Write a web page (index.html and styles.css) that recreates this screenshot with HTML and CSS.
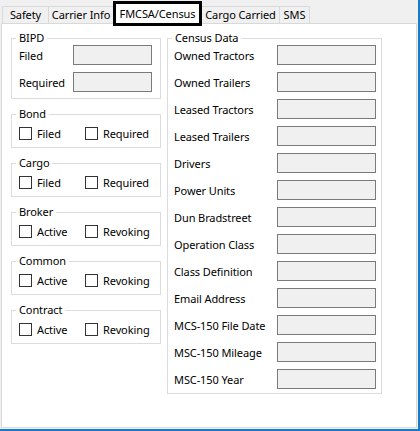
FILE: index.html
```html
<!DOCTYPE html>
<html>
<head>
<meta charset="utf-8">
<link rel="stylesheet" href="styles.css">
</head>
<body>
<div class="window">
  <div class="tabs">
    <div class="tab tab-safety">Safety</div>
    <div class="tab tab-carrier">Carrier Info</div>
    <div class="tab tab-active">FMCSA/Census</div>
    <div class="tab tab-cargo">Cargo Carried</div>
    <div class="tab tab-sms">SMS</div>
  </div>
  <div class="panel">
    <div class="col-left">
      <div class="group">
        <div class="group-title">BIPD</div>
        <div class="fields fields-bipd">
          <div class="field"><span>Filed</span><span class="textbox textbox-sm"></span></div>
          <div class="field"><span>Required</span><span class="textbox textbox-sm"></span></div>
        </div>
      </div>
      <div class="group">
        <div class="group-title">Bond</div>
        <div class="checks">
          <label class="check"><span class="box"></span>Filed</label>
          <label class="check"><span class="box"></span>Required</label>
        </div>
      </div>
      <div class="group">
        <div class="group-title">Cargo</div>
        <div class="checks">
          <label class="check"><span class="box"></span>Filed</label>
          <label class="check"><span class="box"></span>Required</label>
        </div>
      </div>
      <div class="group">
        <div class="group-title">Broker</div>
        <div class="checks">
          <label class="check"><span class="box"></span>Active</label>
          <label class="check"><span class="box"></span>Revoking</label>
        </div>
      </div>
      <div class="group">
        <div class="group-title">Common</div>
        <div class="checks">
          <label class="check"><span class="box"></span>Active</label>
          <label class="check"><span class="box"></span>Revoking</label>
        </div>
      </div>
      <div class="group">
        <div class="group-title">Contract</div>
        <div class="checks">
          <label class="check"><span class="box"></span>Active</label>
          <label class="check"><span class="box"></span>Revoking</label>
        </div>
      </div>
    </div>
    <div class="col-right">
      <div class="group">
        <div class="group-title">Census Data</div>
        <div class="fields fields-census">
          <div class="field"><span>Owned Tractors</span><span class="textbox textbox-lg"></span></div>
          <div class="field"><span>Owned Trailers</span><span class="textbox textbox-lg"></span></div>
          <div class="field"><span>Leased Tractors</span><span class="textbox textbox-lg"></span></div>
          <div class="field"><span>Leased Trailers</span><span class="textbox textbox-lg"></span></div>
          <div class="field"><span>Drivers</span><span class="textbox textbox-lg"></span></div>
          <div class="field"><span>Power Units</span><span class="textbox textbox-lg"></span></div>
          <div class="field"><span>Dun Bradstreet</span><span class="textbox textbox-lg"></span></div>
          <div class="field"><span>Operation Class</span><span class="textbox textbox-lg"></span></div>
          <div class="field"><span>Class Definition</span><span class="textbox textbox-lg"></span></div>
          <div class="field"><span>Email Address</span><span class="textbox textbox-lg"></span></div>
          <div class="field"><span>MCS-150 File Date</span><span class="textbox textbox-lg"></span></div>
          <div class="field"><span>MSC-150 Mileage</span><span class="textbox textbox-lg"></span></div>
          <div class="field"><span>MSC-150 Year</span><span class="textbox textbox-lg"></span></div>
        </div>
      </div>
    </div>
  </div>
</div>
</body>
</html>
```
FILE: styles.css
```css
* { box-sizing: border-box; }

html, body {
  margin: 0;
  padding: 0;
}

body {
  font-family: "Noto Sans", "Open Sans", sans-serif;
  font-size: 11px;
  letter-spacing: -0.1px;
  color: #000;
  background: #f0f0f0;
}

.window {
  width: 420px;
  height: 431px;
  background: #f0f0f0;
  border-right: 2px solid #1979ca;
  border-bottom: 2px solid #1979ca;
}

/* ---- tabs ---- */
.tabs {
  display: flex;
  align-items: flex-end;
  height: 23px;
  padding-left: 2px;
}

.tab {
  height: 17px;
  line-height: 16px;
  text-align: center;
  white-space: nowrap;
  background: #f0f0f0;
  border-top: 1px solid #d9d9d9;
  border-left: 1px solid #d9d9d9;
}

.tab-safety { width: 46px; }
.tab-carrier { width: 65px; }
.tab-cargo { width: 77px; border-left: none; }
.tab-sms { width: 31px; border-right: 1px solid #d9d9d9; }

.tab-active {
  position: relative;
  z-index: 1;
  width: 89px;
  height: 25px;
  line-height: 19px;
  margin-bottom: -3px;
  background: #fff;
  border: 3px solid #000;
}

/* ---- panel ---- */
.panel {
  display: flex;
  align-items: flex-start;
  gap: 6px;
  margin-left: 1px;
  width: 416px;
  height: 405px;
  padding: 14px 0 0 9px;
  background: #fff;
  border: 1px solid #d9d9d9;
}

.col-left {
  display: flex;
  flex-direction: column;
  gap: 15px;
  width: 150px;
}

.col-right {
  width: 215px;
}

/* ---- group boxes ---- */
.group {
  border: 1px solid #dcdcdc;
}

.group-title {
  width: fit-content;
  margin: -8px 0 0 4px;
  padding: 0 3px;
  line-height: 14px;
  background: #fff;
}

.fields {
  display: flex;
  flex-direction: column;
  gap: 7px;
}

.fields-bipd {
  padding: 0 8px 6px 7px;
}

.fields-census {
  padding: 0 5px 4px 6px;
}

.field {
  display: flex;
  align-items: center;
  justify-content: space-between;
  height: 20px;
}

.textbox {
  display: block;
  height: 20px;
  background: #f0f0f0;
  border: 1px solid #7a7a7a;
}

.textbox-sm { width: 79px; }
.textbox-lg { width: 99px; }

/* ---- checkboxes ---- */
.checks {
  display: flex;
  padding: 6px 0 7px 7px;
}

.check {
  display: flex;
  align-items: center;
  width: 66px;
  height: 13px;
  white-space: nowrap;
}

.box {
  width: 13px;
  height: 13px;
  margin-right: 5px;
  background: #fff;
  border: 1px solid #333;
}
```
